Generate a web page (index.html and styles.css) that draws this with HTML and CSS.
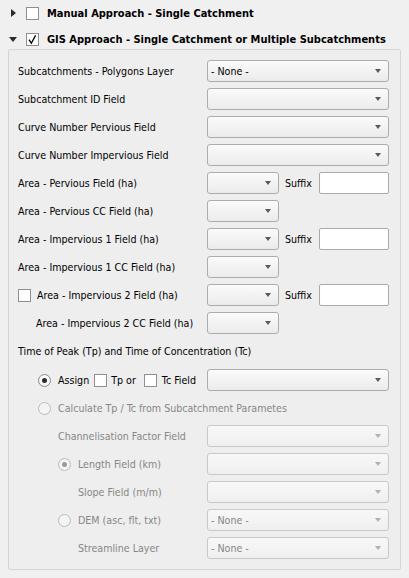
FILE: index.html
```html
<!DOCTYPE html>
<html>
<head>
<meta charset="utf-8">
<link rel="stylesheet" href="styles.css">
</head>
<body>
<div class="header first">
  <span class="twisty"><span class="tri-right"></span></span>
  <span class="cb"></span>
  <span class="htitle">Manual Approach - Single Catchment</span>
</div>
<div class="header second">
  <span class="twisty"><span class="tri-down"></span></span>
  <span class="cb"><svg class="check" width="11" height="11" viewBox="0 0 11 11"><path d="M2 5.6 L4.3 9.2 L8.6 1.4" fill="none" stroke="#000" stroke-width="1.3"/></svg></span>
  <span class="htitle">GIS Approach - Single Catchment or Multiple Subcatchments</span>
</div>
<div class="group">
  <div class="row"><span class="lbl">Subcatchments - Polygons Layer</span><span class="combo"><span class="val">- None -</span><span class="arr"></span></span></div>
  <div class="row"><span class="lbl">Subcatchment ID Field</span><span class="combo"><span class="arr"></span></span></div>
  <div class="row"><span class="lbl">Curve Number Pervious Field</span><span class="combo"><span class="arr"></span></span></div>
  <div class="row"><span class="lbl">Curve Number Impervious Field</span><span class="combo"><span class="arr"></span></span></div>
  <div class="row"><span class="lbl">Area - Pervious Field (ha)</span><span class="combo small"><span class="arr"></span></span><span class="sfx">Suffix</span><span class="sinput"></span></div>
  <div class="row"><span class="lbl">Area - Pervious CC Field (ha)</span><span class="combo small"><span class="arr"></span></span></div>
  <div class="row"><span class="lbl">Area - Impervious 1 Field (ha)</span><span class="combo small"><span class="arr"></span></span><span class="sfx">Suffix</span><span class="sinput"></span></div>
  <div class="row"><span class="lbl">Area - Impervious 1 CC Field (ha)</span><span class="combo small"><span class="arr"></span></span></div>
  <div class="row"><span class="lbl"><span class="cb"></span><span class="cbtext">Area - Impervious 2 Field (ha)</span></span><span class="combo small"><span class="arr"></span></span><span class="sfx">Suffix</span><span class="sinput"></span></div>
  <div class="row"><span class="lbl ind1">Area - Impervious 2 CC Field (ha)</span><span class="combo small"><span class="arr"></span></span></div>
  <div class="row"><span class="lbl wide">Time of Peak (Tp) and Time of Concentration (Tc)</span></div>
  <div class="row assign"><span class="lbl ind2"><span class="radio"><span class="dot"></span></span><span class="rtext">Assign</span><span class="cb tp"></span><span class="tptext">Tp or</span><span class="cb tc"></span><span class="tctext">Tc Field</span></span><span class="combo"><span class="arr"></span></span></div>
  <div class="row dis"><span class="lbl wide ind2"><span class="radio"></span><span class="rtext">Calculate Tp / Tc from Subcatchment Parametes</span></span></div>
  <div class="row dis"><span class="lbl ind3">Channelisation Factor Field</span><span class="combo"><span class="arr"></span></span></div>
  <div class="row dis"><span class="lbl ind3"><span class="radio"><span class="dot"></span></span><span class="rtext">Length Field (km)</span></span><span class="combo"><span class="arr"></span></span></div>
  <div class="row dis"><span class="lbl ind4">Slope Field (m/m)</span><span class="combo"><span class="arr"></span></span></div>
  <div class="row dis"><span class="lbl ind3"><span class="radio"></span><span class="rtext">DEM (asc, flt, txt)</span></span><span class="combo"><span class="val">- None -</span><span class="arr"></span></span></div>
  <div class="row dis"><span class="lbl ind4">Streamline Layer</span><span class="combo"><span class="val">- None -</span><span class="arr"></span></span></div>
</div>
</body>
</html>
```

FILE: styles.css
```css
* { box-sizing: border-box; }

body {
  margin: 0;
  width: 409px;
  height: 578px;
  overflow: hidden;
  background: #f0f0f0;
  font-family: "DejaVu Sans Condensed", "DejaVu Sans", sans-serif;
  font-stretch: condensed;
  font-size: 10.6px;
  color: #000;
}

.header {
  display: flex;
  align-items: center;
  height: 14px;
  padding-left: 8px;
}
.header.first { margin-top: 6px; }
.header.second { margin-top: 12px; }

.twisty {
  width: 10px;
  height: 14px;
  margin-right: 8px;
  display: flex;
  align-items: center;
  justify-content: center;
  flex: none;
}
.tri-right {
  width: 0; height: 0;
  border-left: 5px solid #2b2b2b;
  border-top: 4.5px solid transparent;
  border-bottom: 4.5px solid transparent;
  margin-left: 1px;
}
.tri-down {
  width: 0; height: 0;
  border-top: 5px solid #2b2b2b;
  border-left: 4.5px solid transparent;
  border-right: 4.5px solid transparent;
}

.cb {
  width: 13px;
  height: 13px;
  flex: none;
  border: 1px solid #8f8f8f;
  background: #fff;
  display: flex;
}
.check { display: block; }

.htitle {
  margin-left: 8px;
  font-weight: bold;
  font-size: 11px;
  white-space: nowrap;
}

.group {
  margin: 3px 0 0 8px;
  width: 393px;
  height: 521px;
  border: 1px solid #d6d6d6;
  border-radius: 2px;
  background: #eeeeee;
  padding: 7px 0 0 9px;
}

.row {
  display: flex;
  align-items: center;
  height: 28px;
}
.row.assign { margin-top: 1px; }

.lbl {
  width: 189px;
  flex: none;
  display: flex;
  align-items: center;
  white-space: nowrap;
}
.lbl.wide { width: 370px; }
.ind1 { padding-left: 18px; }
.ind2 { padding-left: 20px; }
.ind3 { padding-left: 40px; }
.ind4 { padding-left: 60px; }

.cbtext { margin-left: 6px; }

.combo {
  width: 182px;
  height: 22px;
  flex: none;
  display: flex;
  align-items: center;
  padding-left: 3px;
  border: 1px solid #acacac;
  border-radius: 3px;
  background: linear-gradient(#fbfbfb, #ebebeb);
}
.combo.small { width: 72px; }
.val { color: #000; }
.arr {
  margin-left: auto;
  margin-right: 7px;
  width: 0; height: 0;
  border-top: 4px solid #5a5a5a;
  border-left: 3.5px solid transparent;
  border-right: 3.5px solid transparent;
}

.sfx { margin-left: 6px; width: 34px; flex: none; }
.sinput {
  width: 70px;
  height: 22px;
  flex: none;
  border: 1px solid #ababab;
  border-radius: 2px;
  background: #fff;
}

.radio {
  width: 13px;
  height: 13px;
  flex: none;
  border-radius: 50%;
  border: 1px solid #8a8a8a;
  background: radial-gradient(circle at 50% 40%, #ffffff, #f0f0f0);
  display: flex;
  align-items: center;
  justify-content: center;
}
.dot {
  width: 5px;
  height: 5px;
  border-radius: 50%;
  background: #2c2c2c;
}
.rtext { margin-left: 7px; }
.cb.tp { margin-left: 5px; }
.tptext { margin-left: 4px; }
.cb.tc { margin-left: 8px; }
.tctext { margin-left: 5px; }

.dis { color: #868686; }
.dis .combo {
  border-color: #c9c9c9;
  background: linear-gradient(#f8f8f8, #efefef);
}
.dis .val { color: #868686; }
.dis .arr { border-top-color: #b0b0b0; }
.dis .radio {
  border-color: #b9b9b9;
  background: #f4f4f4;
}
.dis .dot { background: #9a9a9a; }
```
